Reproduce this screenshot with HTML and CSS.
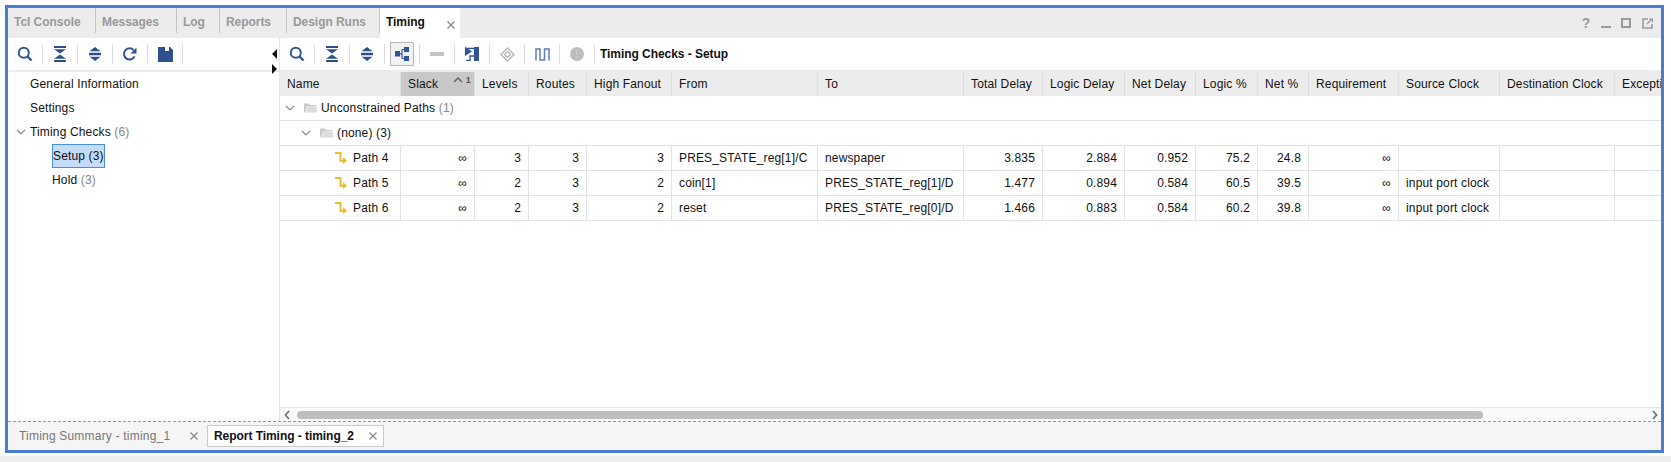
FILE: index.html
```html
<!DOCTYPE html>
<html lang="en">
<head>
    <meta charset="UTF-8">
    <title>Timing</title>
    <link rel="stylesheet" href="styles.css">
</head>
<body>
    <svg class="defs" width="0" height="0">
        <symbol id="i-search" viewBox="0 0 16 16"><circle cx="6.800" cy="6.800" r="5" fill="none" stroke="#34548f" stroke-width="2"/><path d="M10.500 10.500l4 4" stroke="#34548f" stroke-width="2.400"/></symbol>
        <symbol id="i-collapse" viewBox="0 0 14 16"><path d="M1 0h12v2H1zM1 14h12v2H1zM1 3.200h12L7 7.600zM7 8.400l6 4.400H1z" fill="#2f4f8f"/></symbol>
        <symbol id="i-expand" viewBox="0 0 14 16"><path d="M7 1l5.500 4.200h-11zM1 6.700h12v2.600H1zM1.500 10.800h11L7 15z" fill="#2f4f8f"/></symbol>
        <symbol id="i-refresh" viewBox="0 0 16 16"><path d="M12.600 10.400A5.600 5.600 0 1 1 11.600 4" fill="none" stroke="#34548f" stroke-width="2"/><path d="M14.500 1.500v6h-6z" fill="#34548f"/></symbol>
        <symbol id="i-save" viewBox="0 0 15 15"><path d="M0 0h7v4h4V0h1l3 3v12H0z" fill="#2f4f8f"/></symbol>
        <symbol id="i-group" viewBox="0 0 14 14"><path d="M0 4h5v5.500H0zM9 0h5v5H9zM9 9h5v5H9z" fill="#2f5597"/><path d="M5 6.800h2M7 2.500v9M7 2.500h2M7 11.500h2" stroke="#2f5597" stroke-width="1.200" fill="none"/></symbol>
        <symbol id="i-net" viewBox="0 0 14 14"><path d="M9 0h5v14H9zM0 0l7 4.500L0 9z" fill="#2f5597"/><path d="M0 1.500h9M1 13.300h4V9h4" fill="none" stroke="#2f5597" stroke-width="1.300"/></symbol>
        <symbol id="i-diamond" viewBox="0 0 15 15"><path d="M7.500 1l6.500 6.500L7.500 14 1 7.500z" fill="none" stroke="#b5b5b5" stroke-width="1.300"/><path d="M7.500 4.500l3 3-3 3-3-3z" fill="none" stroke="#b5b5b5" stroke-width="1.300"/></symbol>
        <symbol id="i-wave" viewBox="0 0 15 14"><path d="M1 13V1.500h4V12.500h4.500V1.500H14V13" fill="none" stroke="#5f7fb5" stroke-width="1.500"/></symbol>
        <symbol id="i-chevron" viewBox="0 0 10 6"><path d="M1 1l4 4 4-4" fill="none" stroke="#888" stroke-width="1.200"/></symbol>
        <symbol id="i-folder" viewBox="0 0 13 11"><path d="M0 1.500h5l1 1.500h6v1.500H3L1 10.500H0z" fill="#c9c9c9"/><path d="M3.500 5H13v5.500H1.500z" fill="#dcdcdc"/></symbol>
        <symbol id="i-path" viewBox="0 0 12 12"><path d="M0 1h5.500v7.800H8.500" fill="none" stroke="#ecbd2a" stroke-width="2"/><path d="M8 5l4 3.800L8 12z" fill="#ecbd2a"/></symbol>
        <symbol id="i-close" viewBox="0 0 8 8"><path d="M.5.500l7 7M7.500.500l-7 7" stroke="#8a8a8a" stroke-width="1.300"/></symbol>
    </svg>

    <div class="window">
        <div class="tabbar">
            <div class="tab tab-tcl">Tcl Console</div>
            <div class="tab tab-messages">Messages</div>
            <div class="tab tab-log">Log</div>
            <div class="tab tab-reports">Reports</div>
            <div class="tab tab-runs">Design Runs</div>
            <div class="tab tab-active">Timing <svg class="tab-close"><use href="#i-close"/></svg></div>
            <div class="win-icons">
                <span class="help">?</span>
                <span class="win-min"></span>
                <span class="win-max"></span>
                <svg class="win-float" viewBox="0 0 11 11"><path d="M6 1H1v9h9V6" fill="none" stroke="#9a9a9a" stroke-width="1.600"/><path d="M5 6l5-5M7 1h3.500v3.500" fill="none" stroke="#9a9a9a" stroke-width="1.200"/></svg>
            </div>
        </div>

        <div class="main">
            <div class="left-pane">
                <div class="toolbar">
                    <span class="tool"><svg class="ic16"><use href="#i-search"/></svg></span><i class="sep"></i>
                    <span class="tool"><svg class="ic14"><use href="#i-collapse"/></svg></span><i class="sep"></i>
                    <span class="tool"><svg class="ic14"><use href="#i-expand"/></svg></span><i class="sep"></i>
                    <span class="tool"><svg class="ic16"><use href="#i-refresh"/></svg></span><i class="sep"></i>
                    <span class="tool"><svg class="ic15"><use href="#i-save"/></svg></span><i class="sep"></i>
                    <span class="sash"><b class="tri-left"></b><b class="tri-right"></b></span>
                </div>
                <div class="tree">
                    <div class="tree-row">General Information</div>
                    <div class="tree-row">Settings</div>
                    <div class="tree-row"><svg class="tree-chevron"><use href="#i-chevron"/></svg>Timing Checks <span class="count">(6)</span></div>
                    <div class="tree-row tree-child"><span class="selected">Setup (3)</span></div>
                    <div class="tree-row tree-child">Hold <span class="count">(3)</span></div>
                </div>
            </div>

            <div class="right-pane">
                <div class="toolbar">
                    <span class="tool"><svg class="ic16"><use href="#i-search"/></svg></span><i class="sep"></i>
                    <span class="tool"><svg class="ic14"><use href="#i-collapse"/></svg></span><i class="sep"></i>
                    <span class="tool"><svg class="ic14"><use href="#i-expand"/></svg></span><i class="sep"></i>
                    <span class="tool"><span class="toggled"><svg class="ic-square"><use href="#i-group"/></svg></span></span><i class="sep"></i>
                    <span class="tool"><span class="dash"></span></span><i class="sep"></i>
                    <span class="tool"><svg class="ic-square"><use href="#i-net"/></svg></span><i class="sep"></i>
                    <span class="tool"><svg class="ic15"><use href="#i-diamond"/></svg></span><i class="sep"></i>
                    <span class="tool"><svg class="ic15"><use href="#i-wave"/></svg></span><i class="sep"></i>
                    <span class="tool"><span class="dot">!</span></span><i class="sep"></i>
                    <span class="toolbar-title">Timing Checks - Setup</span>
                </div>
                <div class="table-wrap">
                    <table class="paths">
                        <colgroup>
                            <col class="c-name"><col class="c-slack"><col class="c-levels"><col class="c-routes"><col class="c-fanout">
                            <col class="c-from"><col class="c-to"><col class="c-total"><col class="c-logic"><col class="c-net">
                            <col class="c-lpct"><col class="c-npct"><col class="c-req"><col class="c-src"><col class="c-dest"><col class="c-exc">
                        </colgroup>
                        <thead>
                            <tr>
                                <th>Name</th>
                                <th class="sorted">Slack<span class="sort-mark"><svg viewBox="0 0 10 6"><path d="M1 5l4-4 4 4" fill="none" stroke="#666" stroke-width="1.500"/></svg>1</span></th>
                                <th>Levels</th><th>Routes</th><th>High Fanout</th><th>From</th><th>To</th>
                                <th>Total Delay</th><th>Logic Delay</th><th>Net Delay</th><th>Logic %</th><th>Net %</th>
                                <th>Requirement</th><th>Source Clock</th><th>Destination Clock</th><th>Exception</th>
                            </tr>
                        </thead>
                        <tbody>
                            <tr class="group">
                                <td colspan="16"><svg class="row-chevron"><use href="#i-chevron"/></svg><svg class="row-folder"><use href="#i-folder"/></svg>Unconstrained Paths <span class="count">(1)</span></td>
                            </tr>
                            <tr class="group group-2">
                                <td colspan="16"><svg class="row-chevron"><use href="#i-chevron"/></svg><svg class="row-folder"><use href="#i-folder"/></svg>(none) (3)</td>
                            </tr>
                            <tr>
                                <td class="path-name"><svg class="row-path"><use href="#i-path"/></svg>Path 4</td>
                                <td class="num">∞</td><td class="num">3</td><td class="num">3</td><td class="num">3</td>
                                <td>PRES_STATE_reg[1]/C</td><td>newspaper</td>
                                <td class="num">3.835</td><td class="num">2.884</td><td class="num">0.952</td><td class="num">75.2</td><td class="num">24.8</td>
                                <td class="num">∞</td><td></td><td></td><td></td>
                            </tr>
                            <tr>
                                <td class="path-name"><svg class="row-path"><use href="#i-path"/></svg>Path 5</td>
                                <td class="num">∞</td><td class="num">2</td><td class="num">3</td><td class="num">2</td>
                                <td>coin[1]</td><td>PRES_STATE_reg[1]/D</td>
                                <td class="num">1.477</td><td class="num">0.894</td><td class="num">0.584</td><td class="num">60.5</td><td class="num">39.5</td>
                                <td class="num">∞</td><td>input port clock</td><td></td><td></td>
                            </tr>
                            <tr>
                                <td class="path-name"><svg class="row-path"><use href="#i-path"/></svg>Path 6</td>
                                <td class="num">∞</td><td class="num">2</td><td class="num">3</td><td class="num">2</td>
                                <td>reset</td><td>PRES_STATE_reg[0]/D</td>
                                <td class="num">1.466</td><td class="num">0.883</td><td class="num">0.584</td><td class="num">60.2</td><td class="num">39.8</td>
                                <td class="num">∞</td><td>input port clock</td><td></td><td></td>
                            </tr>
                        </tbody>
                    </table>
                </div>
                <div class="hscroll">
                    <svg class="scroll-arrow" viewBox="0 0 6 10"><path d="M5 1L1.500 5 5 9" fill="none" stroke="#777" stroke-width="1.800"/></svg>
                    <span class="scroll-thumb"></span>
                    <svg class="scroll-arrow scroll-arrow-right" viewBox="0 0 6 10"><path d="M1 1l3.500 4L1 9" fill="none" stroke="#777" stroke-width="1.800"/></svg>
                </div>
            </div>
        </div>

        <div class="bottom-tabs">
            <div class="btab">Timing Summary - timing_1<svg class="btab-close"><use href="#i-close"/></svg></div>
            <div class="btab btab-active">Report Timing - timing_2<svg class="btab-close"><use href="#i-close"/></svg></div>
        </div>
    </div>
    <div class="strip"></div>
</body>
</html>
```

FILE: styles.css
```css
html, body {
    margin: 0;
    padding: 0;
    background-color: #fff;
    overflow: hidden;
}

body {
    font-family: 'Liberation Sans', Arial, sans-serif;
    font-size: 12px;
    letter-spacing: 0.15px;
    color: #111;
    padding-top: 5px;
}

.defs {
    position: absolute;
}

.window {
    box-sizing: border-box;
    width: 1659px;
    height: 448px;
    margin-left: 5px;
    border: 3px solid #4a7dcf;
    display: flex;
    flex-direction: column;
    overflow: hidden;
}

.strip {
    height: 6px;
    margin-top: 3px;
    background-color: #eee;
}

/* top tabs */
.tabbar {
    display: flex;
    align-items: flex-start;
    height: 30px;
    flex: none;
    background-color: #ececec;
}

.tab {
    box-sizing: border-box;
    height: 25px;
    line-height: 28px;
    padding-left: 6px;
    border-right: 1px solid #c4c4c4;
    font-weight: bold;
    letter-spacing: -0.05px;
    color: #999;
    white-space: nowrap;
}

.tab-tcl { width: 88px; }
.tab-messages { width: 81px; }
.tab-log { width: 43px; }
.tab-reports { width: 67px; }
.tab-runs { width: 93px; }

.tab-active {
    height: 30px;
    width: 80px;
    border-right: none;
    background-color: #fff;
    color: #111;
    display: flex;
    align-items: flex-start;
}

.tab-close {
    width: 8px;
    height: 8px;
    margin: 13px 5px 0 auto;
    flex: none;
}

.win-icons {
    margin-left: auto;
    display: flex;
    align-items: center;
    height: 30px;
    color: #9a9a9a;
}

.help {
    width: 20px;
    text-align: center;
    font-size: 14px;
    font-weight: bold;
}

.win-min {
    width: 10px;
    height: 2px;
    margin: 7px 5px 0;
    background-color: #9a9a9a;
}

.win-max {
    box-sizing: border-box;
    width: 10px;
    height: 10px;
    margin: 0 5px;
    border: 2px solid #9a9a9a;
}

.win-float {
    width: 11px;
    height: 11px;
    margin: 0 8px 0 6px;
}

/* panes */
.main {
    display: flex;
    height: 383px;
    flex: none;
}

.left-pane {
    width: 271px;
    flex: none;
    border-right: 1px solid #e3e3e3;
}

.right-pane {
    flex: 1;
    min-width: 0;
    display: flex;
    flex-direction: column;
}

.toolbar {
    display: flex;
    align-items: center;
    height: 32px;
    flex: none;
    position: relative;
}

.left-pane .toolbar {
    border-bottom: 2px solid #ececec;
}

.tool {
    width: 34px;
    height: 32px;
    display: flex;
    align-items: center;
    justify-content: center;
    flex: none;
}

.sep {
    width: 1px;
    height: 20px;
    flex: none;
    background-color: #dcdcdc;
}

.ic16 {
    width: 16px;
    height: 16px;
}

.ic15 {
    width: 15px;
    height: 15px;
}

.ic14 {
    width: 14px;
    height: 16px;
}

.ic-square {
    width: 14px;
    height: 14px;
}

.toggled {
    box-sizing: border-box;
    width: 24px;
    height: 24px;
    display: flex;
    align-items: center;
    justify-content: center;
    background-color: #f2f2f2;
    border: 1px solid #b8b8b8;
}

.dash {
    width: 14px;
    height: 4px;
    background-color: #c4c4c4;
}

.dot {
    width: 14px;
    height: 14px;
    border-radius: 50%;
    background-color: #bdbdbd;
    color: #c9c9c9;
    font-size: 11px;
    font-weight: bold;
    line-height: 14px;
    text-align: center;
}

.toolbar-title {
    margin-left: 5px;
    font-weight: bold;
    letter-spacing: -0.05px;
}

/* the two small triangles of the sash between the panes */
.sash b {
    position: absolute;
    right: 2px;
    width: 0;
    height: 0;
    border-top: 5px solid transparent;
    border-bottom: 5px solid transparent;
}

.tri-left {
    top: 11px;
    border-right: 5px solid #111;
}

.tri-right {
    top: 26px;
    border-left: 5px solid #111;
}

/* left tree */
.tree-row {
    height: 24px;
    line-height: 24px;
    padding-left: 22px;
    display: flex;
    align-items: center;
    white-space: pre;
}

.tree-chevron {
    width: 10px;
    height: 6px;
    margin-left: -14px;
    margin-right: 4px;
}

.tree-child {
    padding-left: 44px;
}

.selected {
    box-sizing: border-box;
    width: 53px;
    height: 24px;
    line-height: 22px;
    background-color: #c5dbfa;
    border: 1px solid #4a90d9;
}

.count {
    color: #888;
}

/* table */
.table-wrap {
    flex: 1;
    min-height: 0;
    overflow: hidden;
    border-top: 2px solid #ececec;
}

.paths {
    table-layout: fixed;
    border-collapse: separate;
    border-spacing: 0;
    width: 1435px;
}

.c-name { width: 121px; }
.c-slack { width: 74px; }
.c-levels { width: 54px; }
.c-routes { width: 58px; }
.c-fanout { width: 85px; }
.c-from { width: 146px; }
.c-to { width: 146px; }
.c-total { width: 79px; }
.c-logic { width: 82px; }
.c-net { width: 71px; }
.c-lpct { width: 62px; }
.c-npct { width: 51px; }
.c-req { width: 90px; }
.c-src { width: 101px; }
.c-dest { width: 115px; }
.c-exc { width: 100px; }

.paths th {
    box-sizing: border-box;
    height: 24px;
    padding: 0 0 0 7px;
    text-align: left;
    font-weight: normal;
    background-color: #ececec;
    border-right: 1px solid #dedede;
    white-space: nowrap;
    overflow: hidden;
}

.paths th.sorted {
    background-color: #c8c8c8;
    position: relative;
}

.sort-mark {
    position: absolute;
    right: 3px;
    top: 3px;
    font-size: 9px;
    font-weight: bold;
    color: #555;
    display: flex;
    gap: 3px;
    align-items: center;
}

.sort-mark svg {
    width: 10px;
    height: 6px;
}

.paths td {
    box-sizing: border-box;
    height: 25px;
    padding: 0 0 0 7px;
    border-right: 1px solid #e3e3e3;
    border-bottom: 1px solid #e3e3e3;
    white-space: nowrap;
    overflow: hidden;
}

.paths td.num {
    text-align: right;
    padding: 0 7px 0 0;
}

.group td {
    border-right: none;
    white-space: pre;
}

.paths .group td {
    padding-left: 5px;
}

.paths .group-2 td {
    padding-left: 21px;
}

.row-chevron {
    width: 10px;
    height: 6px;
    margin-right: 9px;
    vertical-align: 1px;
}

.row-folder {
    width: 13px;
    height: 11px;
    margin-right: 4px;
    vertical-align: -1px;
}

.paths td.path-name {
    padding-left: 55px;
}

.row-path {
    width: 12px;
    height: 12px;
    margin-right: 6px;
    vertical-align: -2px;
}

/* horizontal scrollbar */
.hscroll {
    box-sizing: border-box;
    height: 14px;
    flex: none;
    display: flex;
    align-items: center;
    padding: 0 3px 0 4px;
    background-color: #fafafa;
    border-top: 1px solid #e6e6e6;
}

.scroll-arrow {
    width: 6px;
    height: 10px;
    flex: none;
}

.scroll-arrow-right {
    margin-left: auto;
}

.scroll-thumb {
    width: 1186px;
    height: 8px;
    margin-left: 7px;
    border-radius: 4px;
    background-color: #bebebe;
}

/* bottom tabs */
.bottom-tabs {
    flex: 1;
    display: flex;
    align-items: flex-start;
    padding: 3px 0 0 5px;
    background-color: #f5f5f5;
    border-top: 1px dashed #999;
}

.btab {
    box-sizing: border-box;
    width: 194px;
    height: 22px;
    padding: 0 9px 0 6px;
    display: flex;
    align-items: center;
    color: #777;
    letter-spacing: 0.2px;
    white-space: pre;
}

.btab-active {
    width: 177px;
    padding-right: 6px;
    border: 1px solid #ccc;
    background-color: #fff;
    font-weight: bold;
    letter-spacing: -0.05px;
    color: #111;
}

.btab-close {
    width: 8px;
    height: 8px;
    margin-left: auto;
}
```
